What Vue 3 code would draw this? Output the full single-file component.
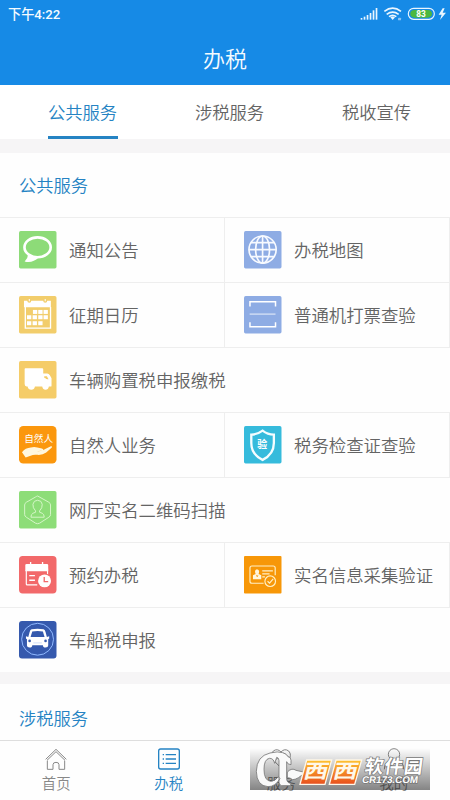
<script setup>
const tabs = ['公共服务', '涉税服务', '税收宣传']
const rows = [
  [{ icon: 'chat', text: '通知公告', bg: '#8ddb78' }, { icon: 'globe', text: '办税地图', bg: '#8eace4' }],
  [{ icon: 'calendar', text: '征期日历', bg: '#f2cd6b' }, { icon: 'scan', text: '普通机打票查验', bg: '#8eace4' }],
  [{ icon: 'truck', text: '车辆购置税申报缴税', bg: '#f5cc68' }],
  [{ icon: 'hand', text: '自然人业务', bg: '#fb970d', r: 13 }, { icon: 'shield', text: '税务检查证查验', bg: '#36bbdc' }],
  [{ icon: 'person', text: '网厅实名二维码扫描', bg: '#8ddd78' }],
  [{ icon: 'booking', text: '预约办税', bg: '#f2696a', r: 11 }, { icon: 'card', text: '实名信息采集验证', bg: '#f79708', r: 3 }],
  [{ icon: 'car', text: '车船税申报', bg: '#3559ad', r: 9 }]
]
const days = [[47, 42], [63, 42], [79, 42], [29, 58], [46, 58], [63, 58], [79, 58], [29, 76], [46, 76], [63, 76]]
const navs = ['首页', '办税', '服务', '我的']
</script>

<template>
  <div class="screen">
    <header class="top">
      <div class="status">
        <span class="time">下午4:22</span>
        <svg class="indicators" viewBox="0 0 270 50">
          <g fill="#eaf6ff">
            <rect x="2" y="33" width="5" height="5" /><rect x="11" y="29" width="5" height="9" /><rect x="20" y="24" width="5" height="14" /><rect x="29" y="18" width="5" height="20" /><rect x="38" y="10" width="5" height="28" /><rect x="47" y="3" width="5" height="35" />
            <path d="M98 39l-7-8q7-5 14 0z" />
            <path d="M248 4l-12 19h9l-5 16 18-22h-10l6-13z" />
          </g>
          <g fill="none" stroke="#eaf6ff" stroke-width="5">
            <path d="M73 13q25-19 50 0M80 22q18-13 36 0M87 29q11-8 22 0" />
          </g>
          <rect x="114" y="32" width="9" height="8" rx="2" fill="#8ac4f2" />
          <rect x="145" y="4" width="78" height="33" rx="16" fill="#168ae6" stroke="#eaf6ff" stroke-width="3.5" />
          <path d="M164 9h39q13 0 13 11.500t-13 11.500h-39q-13 0-13-11.500t13-11.500z" fill="#4cb83e" />
          <text x="183" y="30" class="battery" text-anchor="middle">83</text>
        </svg>
      </div>
      <h1>办税</h1>
    </header>

    <nav class="tabs">
      <div v-for="(t, i) in tabs" :key="t" class="tab" :class="{ active: i === 0 }"><span>{{ t }}</span></div>
    </nav>

    <main>
      <section class="public">
        <h2>公共服务</h2>
        <div v-for="(row, ri) in rows" :key="ri" class="row">
          <div v-for="item in row" :key="item.text" class="cell" :class="{ half: row.length > 1 }">
            <svg class="tile" viewBox="0 0 113 113">
              <rect width="113" height="113" :rx="item.r || 5" :fill="item.bg" />
              <g v-if="item.icon === 'chat'">
                <path d="M26 66q4 14-9 26 24 6 42-12" fill="#fff" />
                <ellipse cx="56" cy="49" rx="39.500" ry="30" :fill="item.bg" stroke="#fff" stroke-width="8" />
              </g>
              <g v-else-if="item.icon === 'globe'" fill="none" stroke="#f7faff" stroke-width="5">
                <circle cx="56" cy="56" r="41" />
                <ellipse cx="56" cy="56" rx="21" ry="41" />
                <path d="M56 14v84M14 56h84M21 35h70M21 77h70" />
              </g>
              <g v-else-if="item.icon === 'calendar'">
                <path d="M19 33v64h76V33" fill="none" stroke="#fff" stroke-width="4" />
                <path d="M15 14h10q0 6 6 6t6-6h36q0 6 6 6t6-6h11v20H15z" fill="#fff" />
                <path d="M31 9v7M79 9v7" stroke="#fff" stroke-width="3" />
                <rect v-for="(d, i) in days" :key="i" :x="d[0] - 5" :y="d[1]" width="13" height="12" fill="#fff" />
              </g>
              <g v-else-if="item.icon === 'scan'" fill="none" stroke="#fff" stroke-width="4.500">
                <path d="M18 32V17h77v15M18 79v14h77V79" /><path d="M17 54.500h78" stroke-width="2.500" />
              </g>
              <g v-else-if="item.icon === 'truck'">
                <path d="M19 22h51q3 0 3 3v13h12q5 0 8 5l5 9v23q0 2-3 2h-5q-2 10-10 10t-10-10H48q-2 10-11 10T26 77h-3q-6-2-6-8V25q0-3 2-3z" fill="#fff" />
                <path d="M76 46h8l5 9q-8 1-9-3-4 0-4-2z" :fill="item.bg" />
              </g>
              <g v-else-if="item.icon === 'hand'">
                <text x="59" y="49" class="hand-text" text-anchor="middle">自然人</text>
                <path d="M9 79q10-13 27-14 10-4 19 0l14 3q6 2 4 6l-19 2q17 1 25-7l17-8q5-1 3 4L82 80q-11 8-26 7-13-2-21 3l-15 5z" fill="#fff7df" />
              </g>
              <g v-else-if="item.icon === 'shield'">
                <path d="M56 14Q40 26 22 26v25q0 34 34 51 34-17 34-51V26Q71 26 56 14z" fill="none" stroke="#f5fdff" stroke-width="7" />
                <text x="55" y="67" class="shield-text" text-anchor="middle">验</text>
              </g>
              <g v-else-if="item.icon === 'person'" fill="none" stroke="#d5f5c8" stroke-width="3">
                <path d="M56 15l34 19q5 3 5 8v29q0 5-5 8L62 97q-6 3-12 0L22 79q-5-3-5-8V42q0-5 5-8l28-16q3-2 6-3z" />
                <path d="M50 60q-9-9-8-20 2-12 14-12t14 12q1 11-8 20v4l8 3q6 3 6 12H36q0-9 6-12l8-3z" />
              </g>
              <g v-else-if="item.icon === 'booking'">
                <path d="M22 42v43q0 2 3 2h30M86 38v18" fill="none" stroke="#fff" stroke-width="3.500" />
                <path d="M19 46V27q0-3 4-3h61q4 0 4 3v19z" fill="#fff" />
                <path d="M35 18v11M71 18v11M31 59h17M31 73h17" stroke="#fff" stroke-width="4" />
                <circle cx="77" cy="75" r="22" :fill="item.bg" />
                <circle cx="77" cy="75" r="19.500" fill="#fff" />
                <path d="M76 63v14h12" fill="none" :stroke="item.bg" stroke-width="4" />
              </g>
              <g v-else-if="item.icon === 'card'" fill="none" stroke="#fff0c6" stroke-width="3.500">
                <path d="M59 82H24q-6 0-6-6V36q0-6 6-6h64q6 0 6 6v22" />
                <path d="M27 70V58l8-4q-5-12 4-14 10 1 5 14l8 4v12z" fill="#fff6de" stroke="none" />
                <path d="M37 57l3 6 2-6" stroke="#f79708" stroke-width="2" />
                <path d="M55 45h32M55 54h22M55 63h8" />
                <circle cx="79" cy="76" r="16" /><path d="M71 76l6 6 11-13" />
              </g>
              <g v-else>
                <circle cx="56" cy="55" r="48" fill="none" stroke="#91b9ff" stroke-width="3" />
                <path d="M38 25q18-3 36 0 4 1 6 8l4 15 7-2v7l-3 2v19q0 6-8 6t-8-7H40q0 7-8 7t-8-6V55l-3-2v-7l7 2 4-15q2-7 6-8z" fill="#fff" />
                <path d="M40 32q16-3 32 0l5 16H35z" :fill="item.bg" />
                <circle cx="32" cy="60" r="4" :fill="item.bg" /><circle cx="80" cy="60" r="4" :fill="item.bg" />
                <path d="M43 66h26" stroke="#b9cdf5" stroke-width="2" />
              </g>
            </svg>
            <span>{{ item.text }}</span>
          </div>
        </div>
      </section>
      <section class="tax"><h2>涉税服务</h2></section>
    </main>

    <footer class="bottom">
      <div v-for="(n, i) in navs" :key="n" class="nav" :class="{ active: i === 1 }">
        <svg viewBox="0 0 66 66" fill="none" stroke="currentColor" stroke-width="3">
          <g v-if="i === 0"><path d="M2 34L33 4l31 30M6 37l27-26 27 26M7 38v26h17V50q0-7 9-7t9 7v14h17V38" /></g>
          <g v-else-if="i === 1"><rect x="2" y="3" width="62" height="60" rx="6" stroke-width="4" /><path d="M23 20h31M23 33h31M23 46h31M14 20h4M14 33h4M14 46h4" stroke-width="4" /></g>
          <g v-else-if="i === 2"><path d="M33 60L11 37Q-1 21 10 9q12-9 23 3Q44 0 56 9q11 12-1 28zM18 35l15-15q8-8 15 0l8 8" /></g>
          <g v-else><circle cx="33" cy="19" r="17" /><path d="M4 64q0-25 22-29M62 64q0-25-22-29" /></g>
        </svg>
        <span>{{ n }}</span>
      </div>
    </footer>

    <svg class="watermark" viewBox="0 0 540 126">
      <defs>
        <linearGradient id="shade" x1="0" y1="0" x2="0" y2="1"><stop offset="0" stop-color="#000" stop-opacity="0" /><stop offset="1" stop-color="#000" stop-opacity=".48" /></linearGradient>
        <linearGradient id="orange" x1="0" y1="0" x2="0" y2="1"><stop offset="0" stop-color="#ffc42f" /><stop offset="1" stop-color="#e84e1d" /></linearGradient>
      </defs>
      <rect width="540" height="126" fill="url(#shade)" />
      <path d="M74 46Q70 30 58 31 42 34 42 64q0 34 20 36 14 0 23-14l5 6q-14 24-36 24-34-2-35-46Q20 24 60 15q24-6 38-1 12 3 16 12 9 1 9 11v13q-11 0-13-9v50q0 14 12 15v7H95q-9-2-8-17V38q0-9-7-10z" fill="#fafafa" stroke="#777" stroke-width="2.500" />
      <path d="M112 72q14-14 26-5l26 6q-19 21-36 22-7-6-16-6z" fill="#fafafa" stroke="#777" stroke-width="2.500" />
      <path d="M170 36h75l-20 73h-75zM258 36h77l-21 73h-76z" fill="url(#orange)" stroke="#fff7e8" stroke-width="4" />
      <text x="0" y="0" class="west" text-anchor="middle" transform="translate(194 91) skewX(-14) scale(1.15 .9)">西</text>
      <text x="0" y="0" class="west" text-anchor="middle" transform="translate(283 91) skewX(-14) scale(1.15 .9)">西</text>
      <text x="0" y="0" class="software" textLength="174" transform="translate(342 75) skewX(-8)">软件园</text>
      <text x="0" y="0" class="domain" textLength="168" lengthAdjust="spacingAndGlyphs" transform="translate(335 106) skewX(-8)">CR173.COM</text>
    </svg>
  </div>
</template>

<style>
body { margin: 0; background: #fff; }
</style>

<style scoped>
* { box-sizing: border-box; }
.screen { position: relative; width: 450px; height: 800px; overflow: hidden; display: flex; flex-direction: column; background: #fefefe; font-family: "Noto Sans CJK SC", sans-serif; font-weight: 350; color: #646464; }
.top { flex: none; height: 85px; background: #168ae6; color: #f4fbff; }
.status { height: 30px; display: flex; align-items: center; justify-content: space-between; padding-left: 8px; }
.time { font: 500 13.2px/30px Roboto, "Noto Sans CJK SC", sans-serif; }
.indicators { width: 90px; height: 16.67px; }
.battery { font: 700 25px Roboto, sans-serif; fill: #fff; }
h1 { margin: 0; font-size: 22px; line-height: 55px; font-weight: 350; text-align: center; }
.tabs { flex: none; height: 54px; padding-left: 9px; display: grid; grid-template-columns: repeat(3, 147px); background: #fff; }
.tab { display: flex; justify-content: center; font-size: 17.3px; line-height: 54px; }
.tab span { width: 70px; height: 54px; text-align: center; white-space: nowrap; }
.active { color: #2583c3; }
.tab.active span { border-bottom: 3px solid #2583c3; }
main { flex: none; height: 601px; padding-top: 14px; overflow: hidden; background: #f6f5f6; }
section { background: #fefefe; }
.public { height: 519px; }
h2 { margin: 0; padding-left: 19px; height: 64px; font-size: 17.3px; line-height: 64px; font-weight: 350; color: #2583c3; }
.row { display: flex; height: 65px; border-top: 1px solid #eee; }
.cell { flex: 1; display: flex; align-items: center; gap: 12.5px; padding-left: 19px; font-size: 17.4px; line-height: 26px; white-space: nowrap; }
.half { border-right: 1px solid #eee; }
.tile { flex: none; width: 37.5px; height: 37.5px; }
.hand-text { font: 400 29px "Noto Sans CJK SC", sans-serif; fill: #fff; }
.shield-text { font: 700 30px "Noto Sans CJK SC", sans-serif; fill: #fff; }
.tax { margin-top: 12px; height: 60px; }
.tax h2 { line-height: 67px; }
.bottom { flex: none; height: 60px; display: grid; grid-template-columns: repeat(4, 1fr); border-top: 1px solid #dedede; background: #fefefe; }
.nav { display: flex; flex-direction: column; align-items: center; padding-top: 7px; font-size: 14.4px; line-height: 22px; color: #888; }
.nav svg { width: 22px; height: 22px; margin-bottom: 2px; }
.nav.active { color: #2583c3; }
.watermark { position: absolute; left: 250px; top: 748px; width: 180px; height: 42px; }
.west { font: 700 64px "Noto Sans CJK SC", sans-serif; fill: #fff8e8; }
.software { font: 700 56px "Noto Sans CJK SC", sans-serif; fill: #fff; stroke: #777; stroke-width: 4px; paint-order: stroke; }
.domain { font: 700 29px "Liberation Sans", sans-serif; fill: #fff; stroke: #777; stroke-width: 4px; paint-order: stroke; }
</style>
